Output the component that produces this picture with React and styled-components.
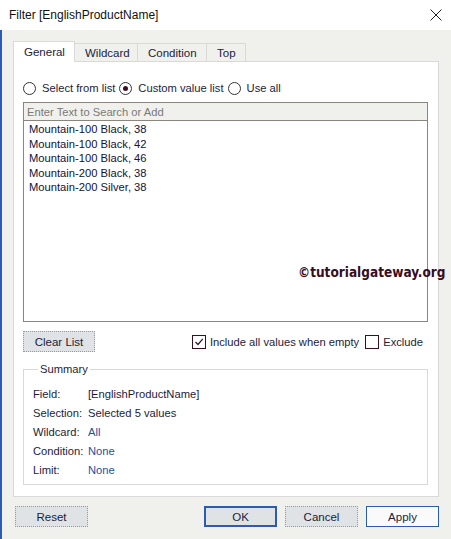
import React from 'react'
import styled, { createGlobalStyle } from 'styled-components'

const GlobalStyle = createGlobalStyle`
  body {
    margin: 0;
    background: #f0f0ec;
    font-family: "Liberation Sans", Arial, sans-serif;
  }
`

const Window = styled.div`
  position: relative;
  width: 451px;
  height: 539px;
  display: flex;
  flex-direction: column;
  overflow: hidden;
  font-size: 11.2px;
  color: #1c1c3a;
`
const TitleBar = styled.div`
  height: 30px;
  background: #fff;
  display: flex;
  align-items: center;
  justify-content: space-between;
  padding: 0 9px 0 9px;
  font-size: 12px;
  color: #111;
`
const Body = styled.div`
  flex: 1;
  background: #f0f0ec;
  border-left: 2px solid #2b5bb3;
  padding: 11px 12px 0 11px;
  display: flex;
  flex-direction: column;
`
const TabRow = styled.div`
  display: flex;
  align-items: flex-end;
  height: 21px;
  position: relative;
  z-index: 1;
`
const Tab = styled.div`
  width: ${p => p.w}px;
  height: ${p => (p.active ? 21 : 19)}px;
  box-sizing: border-box;
  background: ${p => (p.active ? '#fff' : '#f0f0ec')};
  border: 1px solid #d9d9d9;
  border-bottom: ${p => (p.active ? 'none' : '1px solid #d9d9d9')};
  margin-left: ${p => (p.first ? 0 : -1)}px;
  display: flex;
  align-items: center;
  padding-left: 10px;
  padding-top: ${p => (p.active ? 0 : 1)}px;
  font-size: 11.5px;
  color: #1c1c3a;
`
const Panel = styled.div`
  margin-top: -1px;
  width: 426px;
  height: 436px;
  box-sizing: border-box;
  background: #fff;
  border: 1px solid #d9d9d9;
  padding: 18px 10px 0 9px;
  display: flex;
  flex-direction: column;
`
const RadioRow = styled.div`
  display: flex;
  align-items: center;
  height: 16px;
`
const Radio = styled.span`
  width: 11px;
  height: 11px;
  border: 1px solid #333;
  border-radius: 50%;
  display: flex;
  align-items: center;
  justify-content: center;
  margin-right: 6px;
  &::after {
    content: '';
    width: 5px;
    height: 5px;
    border-radius: 50%;
    background: ${p => (p.checked ? '#3a1020' : 'transparent')};
  }
`
const RadioLabel = styled.span`
  margin-right: 4px;
`
const SearchBox = styled.div`
  margin-top: 6px;
  height: 19px;
  box-sizing: border-box;
  border: 1px solid #8a857f;
  background: #f0f0ec;
  display: flex;
  align-items: center;
  padding-left: 3px;
  color: #7a7a7a;
`
const List = styled.div`
  height: 201px;
  box-sizing: border-box;
  border: 1px solid #8a857f;
  border-top: none;
  padding: 1px 0 0 5px;
  color: #12123a;
`
const ListItem = styled.div`
  height: 14.5px;
  line-height: 14.5px;
`
const OptionRow = styled.div`
  margin-top: 9px;
  display: flex;
  align-items: center;
`
const Button = styled.div`
  width: ${p => p.w || 73}px;
  height: 21px;
  box-sizing: border-box;
  display: flex;
  align-items: center;
  justify-content: center;
  font-size: 11.5px;
  color: #1c1c3a;
  background: ${p => (p.plain ? '#fafafa' : '#dfe3e6')};
  border: ${p => (p.primary ? '2px solid #2b5bb3' : p.plain ? '1.5px solid #2b5bb3' : '1px dotted #7d9ec6')};
`
const Spacer = styled.div`
  flex: 1;
`
const Check = styled.span`
  width: 12px;
  height: 12px;
  border: 1px solid #3a1020;
  display: flex;
  align-items: center;
  justify-content: center;
  margin-right: 4px;
`
const CheckLabel = styled.span`
  margin-right: ${p => p.gap || 6}px;
`
const Summary = styled.fieldset`
  margin: 11px 0 0 0;
  height: 122px;
  box-sizing: border-box;
  border: 1px solid #d9d9d9;
  padding: 9px 0 0 9px;
`
const Legend = styled.legend`
  padding: 0 2px;
  margin-left: 5px;
  color: #1c1c3a;
`
const SummaryRow = styled.div`
  display: flex;
  height: 19.2px;
  align-items: center;
`
const SummaryLabel = styled.span`
  width: 55px;
  flex-shrink: 0;
`
const SummaryValue = styled.span`
  color: ${p => (p.blue ? '#2350a3' : '#1c1c3a')};
`
const ButtonRow = styled.div`
  margin-top: 9px;
  display: flex;
  gap: 8px;
  padding-left: 2px;
`
const Watermark = styled.div`
  position: absolute;
  left: 298px;
  top: 264px;
  font-family: "DejaVu Sans Condensed", "DejaVu Sans", sans-serif;
  font-stretch: condensed;
  font-weight: bold;
  font-size: 13.5px;
  color: #3a0c22;
`

const CloseIcon = () => (
  <svg width="12" height="12" viewBox="0 0 12 12">
    <path d="M0.5 0.5 L11.5 11.5 M11.5 0.5 L0.5 11.5" stroke="#222" strokeWidth="1" />
  </svg>
)

const CheckMark = () => (
  <svg width="10" height="10" viewBox="0 0 10 10">
    <path d="M1.5 5 L4 7.5 L8.8 1.8" stroke="#3a1020" strokeWidth="1.2" fill="none" />
  </svg>
)

const items = [
  'Mountain-100 Black, 38',
  'Mountain-100 Black, 42',
  'Mountain-100 Black, 46',
  'Mountain-200 Black, 38',
  'Mountain-200 Silver, 38'
]

const summary = [
  ['Field:', '[EnglishProductName]', false],
  ['Selection:', 'Selected 5 values', false],
  ['Wildcard:', 'All', true],
  ['Condition:', 'None', true],
  ['Limit:', 'None', true]
]

export default function App() {
  return (
    <Window>
      <GlobalStyle />
      <TitleBar>
        <span>Filter [EnglishProductName]</span>
        <CloseIcon />
      </TitleBar>
      <Body>
        <TabRow>
          <Tab first active w={62}>General</Tab>
          <Tab w={64}>Wildcard</Tab>
          <Tab w={70}>Condition</Tab>
          <Tab w={40}>Top</Tab>
        </TabRow>
        <Panel>
          <RadioRow>
            <Radio />
            <RadioLabel>Select from list</RadioLabel>
            <Radio checked />
            <RadioLabel>Custom value list</RadioLabel>
            <Radio />
            <RadioLabel>Use all</RadioLabel>
          </RadioRow>
          <SearchBox>Enter Text to Search or Add</SearchBox>
          <List>
            {items.map(it => <ListItem key={it}>{it}</ListItem>)}
          </List>
          <OptionRow>
            <Button w={72}>Clear List</Button>
            <Spacer />
            <Check><CheckMark /></Check>
            <CheckLabel>Include all values when empty</CheckLabel>
            <Check />
            <CheckLabel gap={5}>Exclude</CheckLabel>
          </OptionRow>
          <Summary>
            <Legend>Summary</Legend>
            {summary.map(([l, v, b]) => (
              <SummaryRow key={l}>
                <SummaryLabel>{l}</SummaryLabel>
                <SummaryValue blue={b}>{v}</SummaryValue>
              </SummaryRow>
            ))}
          </Summary>
        </Panel>
        <ButtonRow>
          <Button>Reset</Button>
          <Spacer />
          <Button primary>OK</Button>
          <Button>Cancel</Button>
          <Button plain>Apply</Button>
        </ButtonRow>
      </Body>
      <Watermark>©tutorialgateway.org</Watermark>
    </Window>
  )
}
